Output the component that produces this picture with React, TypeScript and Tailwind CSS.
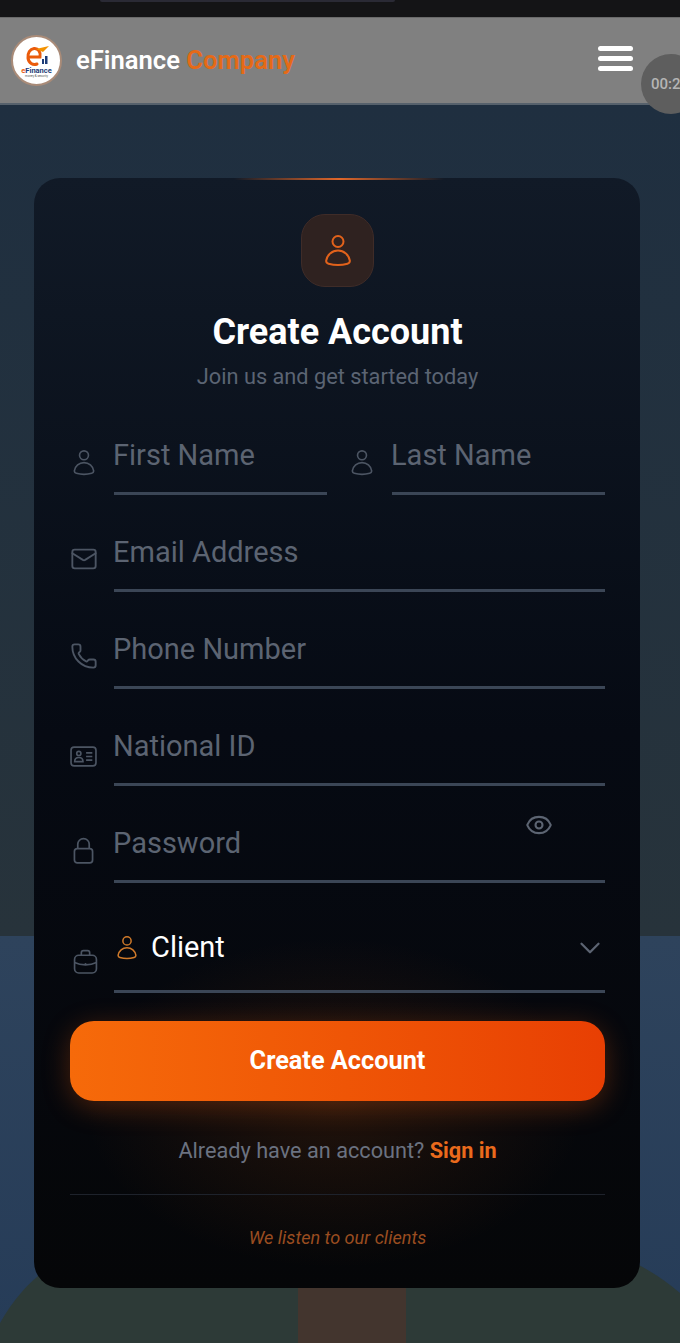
import { ChevronDown, Eye, Mail, Phone } from 'lucide-react';
import type { ReactNode } from 'react';

function UserIcon({ className }: { className: string }) {
    return (
        <svg viewBox="0 0 26 32" fill="none" stroke="currentColor" strokeWidth="2" className={className}>
            <circle cx="13" cy="6.500" r="5.500" />
            <path d="M13 15.500C7 15.500 2 20 1.200 25.500c-.2 1.500.8 2.800 2.300 3.200 6 1.600 13 1.600 19 0 1.500-.4 2.500-1.700 2.300-3.200C24 20 19 15.500 13 15.500Z" />
        </svg>
    );
}

function IdIcon() {
    return (
        <svg viewBox="0 0 26 20" fill="none" stroke="currentColor" strokeWidth="1.600" className="h-[21px] w-[27px]">
            <rect x="1" y="1" width="24" height="18" rx="3" />
            <circle cx="8.500" cy="7" r="2" />
            <path d="M4.500 15c0-2.500 1.500-4 4-4s4 1.500 4 4Z" />
            <path d="M15.500 6.500h6M15.500 10h6M15.500 13.500h6" />
        </svg>
    );
}

function LockIcon() {
    return (
        <svg viewBox="0 0 22 28" fill="none" stroke="currentColor" strokeWidth="1.800" className="ml-[3px] h-[27px] w-[21px]">
            <rect x="1.500" y="12" width="19" height="15" rx="3" />
            <path d="M5 12V7.500a6 6 0 0 1 12 0V12" />
        </svg>
    );
}

function CaseIcon() {
    return (
        <svg viewBox="0 0 24 24" fill="none" stroke="currentColor" strokeWidth="1.600" className="ml-[3px] size-[25px]">
            <rect x="1.500" y="6" width="21" height="17" rx="4" />
            <path d="M8 6V3.500C8 2.200 9 1.500 10 1.500h4c1 0 2 .7 2 2V6" />
            <path d="M1.500 13c6 3 15 3 21 0" />
            <path d="M12 13.500v1.500" />
        </svg>
    );
}

function Logo() {
    return (
        <div className="flex h-[51px] w-[51px] flex-col items-center justify-center rounded-full border-2 border-[#a98b78] bg-white">
            <svg viewBox="0 0 30 24" className="-mb-px h-[24px] w-[30px]" fill="none">
                <path
                    d="M7 13h11c1-5-2-9-6-8.500C8 5 5.500 9 6 14c.5 5 5 7.500 9 6"
                    stroke="#ea5b0c"
                    strokeWidth="3"
                    strokeLinecap="round"
                />
                <path d="M14 5l13-3-6 6z" fill="#f39200" />
                <rect x="20" y="15" width="2" height="5" fill="#1d3c78" />
                <rect x="23" y="12" width="2.500" height="8" fill="#1d3c78" />
            </svg>
            <span className="text-[7.500px] leading-[7px] font-bold text-[#1d3c78]">
                <span className="text-[#ea5b0c]">e</span>Finance
            </span>
            <span className="text-[3px] leading-[4px] text-[#555]">money &amp; security</span>
        </div>
    );
}

function Field({ icon, placeholder, action }: { icon: ReactNode; placeholder: string; action?: ReactNode }) {
    return (
        <div className="flex min-w-0 flex-1">
            <div className="flex w-[44px] shrink-0 items-end pb-[19px] text-[#4c5563]">{icon}</div>
            <div className="relative min-w-0 flex-1">
                <input
                    type="text"
                    placeholder={placeholder}
                    className="h-[76px] w-full border-b-[3px] border-[#3b4656] bg-transparent pb-px indent-[-1px] text-[29px] outline-none placeholder:text-[#5c6472]"
                />
                {action}
            </div>
        </div>
    );
}

export default function App() {
    return (
        <div className="relative h-[1343px] w-[680px] overflow-hidden bg-[#2c4059] font-['Roboto',sans-serif]">
            {/* backdrop */}
            <div className="absolute inset-x-0 top-[105px] h-[831px] bg-gradient-to-b from-[#1f2f40] to-[#27333b]" />
            <div className="absolute inset-x-0 top-[936px] h-[407px] bg-gradient-to-b from-[#2e435c] to-[#263c58]" />
            <svg viewBox="0 0 680 120" className="absolute bottom-0 left-0 h-[120px] w-[680px]">
                <path d="M0 100C40 30 100 10 200 10h260c100 0 160 10 220 60v50H0Z" fill="#2d3a37" />
                <rect x="298" y="40" width="108" height="80" fill="#43352e" />
            </svg>

            <div className="relative flex flex-col">
                <div className="relative h-[17px] bg-[#141416]">
                    <div className="absolute top-0 left-[100px] h-[2px] w-[295px] rounded-b-full bg-[#2a2a35]" />
                </div>
                <header className="flex h-[88px] items-center justify-between border-t border-b-2 border-t-[#6a6a6a] border-b-[#56616c] bg-[#808080] pr-[47px] pl-[11px]">
                    <div className="flex items-center gap-[14px]">
                        <Logo />
                        <span className="text-[25.600px] font-semibold text-white">
                            eFinance <span className="text-[#e56a17]">Company</span>
                        </span>
                    </div>
                    <div className="-mt-[4px] flex flex-col gap-[5px]">
                        <span className="h-[5px] w-[35px] rounded-full bg-white" />
                        <span className="h-[5px] w-[35px] rounded-full bg-white" />
                        <span className="h-[5px] w-[35px] rounded-full bg-white" />
                    </div>
                </header>

                <main className="pt-[73px] pr-[40px] pl-[34px]">
                    <section className="relative flex h-[1110px] flex-col overflow-hidden rounded-[26px] bg-gradient-to-b from-[#111a27] via-[#060a13] to-[#050608] pt-[36px] pr-[35px] pl-[36px]">
                        <div className="absolute top-0 left-[200px] h-[2px] w-[210px] bg-gradient-to-r from-transparent via-[#e0672a] to-transparent" />
                        <div className="pointer-events-none absolute top-[760px] left-[50px] h-[330px] w-[500px] rounded-full bg-[radial-gradient(closest-side,rgba(180,80,10,0.16),transparent)]" />

                        <div className="relative flex flex-col items-center">
                            <div className="flex h-[73px] w-[73px] items-center justify-center rounded-[24px] border border-[#3f2c28] bg-[#2f2220] text-[#e2621b]">
                                <UserIcon className="h-[32px] w-[26px]" />
                            </div>
                            <h1 className="mt-[23px] text-[36px] leading-[44px] font-bold text-white">Create Account</h1>
                            <p className="mt-[10px] text-[21.750px] leading-[26px] text-[#5b6473]">Join us and get started today</p>
                        </div>

                        <div className="relative mt-[29px] flex flex-col gap-[21px]">
                            <div className="flex gap-[21px]">
                                <Field icon={<UserIcon className="ml-[3px] h-[26px] w-[22px]" />} placeholder="First Name" />
                                <Field icon={<UserIcon className="ml-[3px] h-[26px] w-[22px]" />} placeholder="Last Name" />
                            </div>
                            <Field icon={<Mail className="size-[28px]" strokeWidth={1.6} />} placeholder="Email Address" />
                            <Field icon={<Phone className="size-[28px]" strokeWidth={1.6} />} placeholder="Phone Number" />
                            <Field icon={<IdIcon />} placeholder="National ID" />
                            <Field
                                icon={<LockIcon />}
                                placeholder="Password"
                                action={<Eye className="absolute top-[4px] right-[52px] size-[28px] text-[#5c6472]" strokeWidth={1.8} />}
                            />
                            <div className="flex">
                                <div className="flex w-[44px] shrink-0 items-end pb-[19px] text-[#4c5563]">
                                    <CaseIcon />
                                </div>
                                <div className="flex h-[89px] flex-1 items-center justify-between border-b-[3px] border-[#3b4656] pt-[2px]">
                                    <div className="flex items-center gap-[14px] pl-[3px]">
                                        <UserIcon className="h-[24px] w-[20px] text-[#d07a2a]" />
                                        <span className="text-[29px] text-white">Client</span>
                                    </div>
                                    <ChevronDown className="-mr-[2px] size-[34px] text-[#5c6472]" strokeWidth={1.6} />
                                </div>
                            </div>
                        </div>

                        <button
                            type="button"
                            className="relative mt-[28px] h-[80px] rounded-[24px] bg-gradient-to-r from-[#f66a0a] to-[#e83f03] text-[25.300px] font-bold text-white shadow-[0_6px_28px_rgba(234,88,12,0.3)]"
                        >
                            Create Account
                        </button>

                        <p className="relative mt-[36px] text-center text-[21.700px] leading-[28px] text-[#6b7280]">
                            Already have an account? <span className="font-bold text-[#ea6a1c]">Sign in</span>
                        </p>
                        <div className="relative mt-[29px] h-px bg-[#1e222b]" />
                        <p className="relative mt-[31px] text-center text-[18.100px] leading-[24px] text-[#9a4d20] italic">We listen to our clients</p>
                    </section>
                </main>
            </div>

            <div className="absolute top-[54px] left-[641px] flex h-[60px] w-[60px] items-center rounded-full bg-[#5e5e5e] pl-[10px] text-[15px] font-medium text-[#b5b5b5]">
                00:2
            </div>
        </div>
    );
}
